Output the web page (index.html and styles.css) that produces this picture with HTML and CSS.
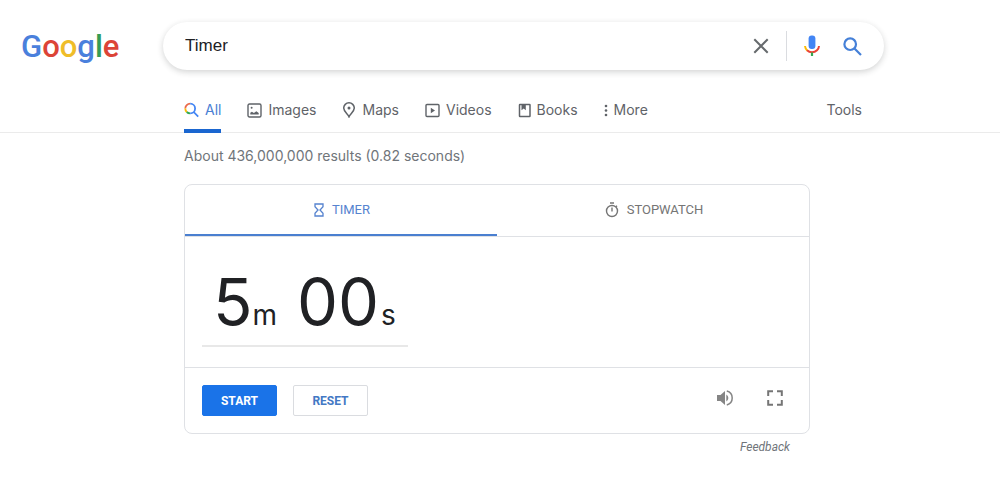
FILE: index.html
```html
<!DOCTYPE html>
<html lang="en">
<head>
<meta charset="utf-8">
<meta name="viewport" content="width=device-width, initial-scale=1">
<title>Timer - Google Search</title>
<link rel="stylesheet" href="styles.css">
</head>
<body>
<header class="top">
  <a class="logo" href="#" aria-label="Google"><span class="blue">G</span><span class="red">o</span><span class="yellow">o</span><span class="blue">g</span><span class="green">l</span><span class="red">e</span></a>
  <form class="search" role="search">
    <input class="search-input" type="text" value="Timer" aria-label="Search">
    <button class="icon-btn clear" type="button" aria-label="Clear">
      <svg width="16" height="16" viewBox="0 0 16 16" fill="none" stroke="#666a6d" stroke-width="2"><path d="M1.3 1.3 14.7 14.7M14.7 1.3 1.3 14.7"/></svg>
    </button>
    <span class="divider"></span>
    <button class="icon-btn mic" type="button" aria-label="Search by voice">
      <svg width="16" height="22" viewBox="0 0 16 22" fill="none"><rect x="4.6" y="0.5" width="6.8" height="13.5" rx="3" fill="#4285f4"/><path d="M1 11c.2 2 .9 3.4 2.2 4.500" stroke="#fbbc04" stroke-width="2"/><path d="M3 15.300c2.800 2.700 7.200 2.700 10 0 1.200-1.200 1.900-2.500 2-4.300" stroke="#ea4335" stroke-width="2"/><path d="M8 17.500V21" stroke="#34a853" stroke-width="2.200"/></svg>
    </button>
    <button class="icon-btn" type="submit" aria-label="Search">
      <svg width="19" height="19" viewBox="0 0 19 19" fill="none" stroke="#4580d8" stroke-width="2.200"><circle cx="7.200" cy="7.200" r="5.800"/><path d="m11.500 11.500 6.500 6.500"/></svg>
    </button>
  </form>
</header>

<nav class="nav" aria-label="Result types">
  <div class="nav-row">
    <a class="tab active" href="#">
      <svg width="15" height="16" viewBox="0 0 15 16" fill="none" stroke-width="1.800"><path d="M1.300 6.500A4.900 4.900 0 0 1 6.200 1.600" stroke="#ea6a4b"/><path d="M2.700 10A4.900 4.900 0 0 1 1.300 6.500" stroke="#fbbc04"/><path d="M6.200 11.400A4.900 4.900 0 0 1 2.700 10" stroke="#34a853"/><path d="M6.200 1.600a4.900 4.900 0 0 1 0 9.800M9.700 10l4.500 4.700" stroke="#4285f4"/></svg>
      <span>All</span></a>
    <a class="tab" href="#">
      <svg width="15" height="15" viewBox="0 0 15 15" fill="none" stroke="#5f6368" stroke-width="1.400"><rect x="1" y="1" width="13" height="13" rx="1.500"/><circle cx="4.600" cy="4.800" r="1" fill="#5f6368" stroke="none"/><path d="M3.300 11.600v-1.800l1.600-1 2 1.200 2.400-1.800 2.400 1.800v1.600z" fill="#5f6368" stroke="none"/></svg>
      <span>Images</span></a>
    <a class="tab" href="#">
      <svg width="14" height="16" viewBox="0 0 14 16" fill="none" stroke="#5f6368" stroke-width="1.500"><path d="M7 14.800C6 12 1.700 9.600 1.700 6.100a5.300 5.300 0 0 1 10.600 0c0 3.500-4.300 5.900-5.300 8.700z"/><circle cx="7" cy="6" r="1.500" fill="#5f6368" stroke="none"/></svg>
      <span>Maps</span></a>
    <a class="tab" href="#">
      <svg width="15" height="15" viewBox="0 0 15 15" fill="none" stroke="#5f6368" stroke-width="1.400"><rect x="1" y="1.500" width="13" height="12" rx="1"/><path d="m5.800 4.800 4.200 2.700-4.200 2.700z" fill="#5f6368" stroke="none"/></svg>
      <span>Videos</span></a>
    <a class="tab" href="#">
      <svg width="13" height="15" viewBox="0 0 13 15" fill="none" stroke="#5f6368" stroke-width="1.500"><rect x="1.500" y="1.500" width="10.500" height="12" rx="0.500"/><path d="M3.500 1.500h4.300v5.700L5.700 5.600 3.500 7.200z" fill="#5f6368" stroke="none"/></svg>
      <span>Books</span></a>
    <button class="tab more" type="button">
      <svg width="4" height="13" viewBox="0 0 4 13" fill="#5f6368"><circle cx="2" cy="2" r="1.300"/><circle cx="2" cy="6.500" r="1.300"/><circle cx="2" cy="11" r="1.300"/></svg>
      <span>More</span></button>
    <button class="tab tools" type="button">Tools</button>
  </div>
</nav>

<main class="results">
  <p class="stats">About 436,000,000 results (0.82 seconds)</p>
  <section class="card">
    <div class="modes" role="tablist">
      <button class="mode selected" type="button" role="tab" aria-selected="true">
        <svg width="10" height="14" viewBox="0 0 10 14" fill="none" stroke="#5683cf" stroke-width="1.300"><path d="M1 1h8v2.800L6 7l3 3.200V13H1v-2.800L4 7 1 3.800z"/></svg>
        <span>TIMER</span></button>
      <button class="mode" type="button" role="tab" aria-selected="false">
        <svg width="14" height="16" viewBox="0 0 14 16" fill="none" stroke="#757575" stroke-width="1.400"><circle cx="7" cy="9" r="5.500"/><path d="M5 1h4M7 5.500V9.500M11 4.800l1-1"/></svg>
        <span>STOPWATCH</span></button>
    </div>
    <div class="clock">
      <div class="time"><span class="num">5</span><span class="unit">m</span><span class="num seconds">00</span><span class="unit">s</span></div>
    </div>
    <div class="actions">
      <button class="btn primary" type="button">START</button>
      <button class="btn" type="button">RESET</button>
      <div class="tools-right">
        <button class="icon-btn" type="button" aria-label="Sound">
          <svg width="18" height="18" viewBox="0 0 18 18" fill="#858585"><path d="M1 6v6h3.500L9 16V2L4.500 6z"/><path d="M10.300 5.500c1.200.7 2 2 2 3.500s-.8 2.800-2 3.500z"/><path d="M10.800 2.100c3.100.8 5.400 3.500 5.400 6.900s-2.300 6.100-5.400 6.900" fill="none" stroke="#858585" stroke-width="1.500"/></svg>
        </button>
        <button class="icon-btn" type="button" aria-label="Full screen">
          <svg width="16" height="16" viewBox="0 0 16 16" fill="none" stroke="#757575" stroke-width="2"><path d="M1.200 6V1.200H6M10 1.200h4.800V6M14.800 10v4.800H10M6 14.800H1.200V10"/></svg>
        </button>
      </div>
    </div>
  </section>
  <a class="feedback" href="#">Feedback</a>
</main>
</body>
</html>
```
FILE: styles.css
```css
* {
  box-sizing: border-box;
}

body {
  margin: 0;
  background: #fff;
  color: #202124;
  font-family: Inter, "Liberation Sans", sans-serif;
}

button {
  margin: 0;
  padding: 0;
  border: 0;
  background: none;
  font: inherit;
  cursor: pointer;
}

a {
  text-decoration: none;
}

svg {
  display: block;
  flex: none;
}

.top {
  display: grid;
  grid-template-columns: 142px minmax(0, 721px);
  align-items: center;
  padding: 22px 16px 0 21px;
}

.logo {
  font-family: Roboto, sans-serif;
  font-size: 31px;
  line-height: 40px;
  padding-top: 2px;
  font-weight: 500;
}

.blue { color: #4a80dc; }
.red { color: #dc4437; }
.yellow { color: #efbd29; }
.green { color: #349c55; }

.search {
  display: flex;
  align-items: center;
  height: 48px;
  padding: 0 22px;
  border-radius: 24px;
  box-shadow: 0 2px 6px rgba(32, 33, 36, 0.2);
}

.search-input {
  flex: 1;
  min-width: 0;
  padding: 0;
  border: 0;
  outline: 0;
  background: none;
  color: #202124;
  font-family: "Liberation Sans", Arial, sans-serif;
  font-size: 17px;
  line-height: 24px;
}

.icon-btn {
  display: grid;
  place-items: center;
}

.divider {
  width: 1px;
  height: 30px;
  margin: 0 17px;
  background: #dadce0;
}

.mic {
  margin-right: 23px;
}

.nav {
  margin-top: 20px;
  border-bottom: 1px solid #ebebeb;
}

.nav-row {
  display: flex;
  gap: 26px;
  max-width: 878px;
  height: 42px;
  padding: 0 16px 0 184px;
}

.tab {
  display: flex;
  align-items: center;
  gap: 6px;
  height: 43px;
  padding-top: 1px;
  border-bottom: 4px solid transparent;
  color: #5f6368;
  font-size: 14px;
  line-height: 20px;
}

.active {
  border-color: #1a66d0;
  color: #4a80d4;
}

.tools {
  margin-left: auto;
}

.results {
  max-width: 826px;
  padding: 13px 16px 0 184px;
}

.stats {
  margin: 0;
  color: #70757a;
  font-size: 14px;
  line-height: 20px;
}

.card {
  margin-top: 18px;
  border: 1px solid #dfe1e5;
  border-radius: 8px;
}

.modes {
  display: grid;
  grid-template-columns: 1fr 1fr;
  border-bottom: 1px solid #dfe1e5;
}

.mode {
  display: flex;
  align-items: center;
  justify-content: center;
  gap: 8px;
  height: 51px;
  padding-left: 2px;
  border-bottom: 2px solid transparent;
  color: #757575;
  font-family: Roboto, sans-serif;
  font-size: 13px;
}

.selected {
  border-color: #4a7fd0;
  color: #5683cf;
}

.clock {
  padding: 25px 17px 20px;
  border-bottom: 1px solid #dfe1e5;
}

.time {
  display: flex;
  align-items: baseline;
  width: fit-content;
  padding: 0 12px 4px 11px;
  border-bottom: 2px solid #e8e8e8;
}

.num {
  font-size: 65px;
  line-height: 79px;
}

.seconds {
  margin: 0 2px 0 20px;
}

.unit {
  font-size: 28px;
}

.actions {
  display: flex;
  align-items: flex-start;
  gap: 16px;
  padding: 17px 26px 17px 17px;
}

.btn {
  width: 75px;
  height: 31px;
  border: 1px solid #dadce0;
  border-radius: 2px;
  color: #4378c4;
  font-family: Roboto, sans-serif;
  font-size: 12px;
  font-weight: 700;
}

.primary {
  border-color: #1a73e8;
  background: #1a73e8;
  color: #fff;
}

.tools-right {
  display: flex;
  align-items: center;
  gap: 33px;
  height: 26px;
  margin-left: auto;
}

.feedback {
  display: block;
  width: fit-content;
  margin: 5px 20px 0 auto;
  color: #70757a;
  font-family: Roboto, sans-serif;
  font-size: 12px;
  line-height: 16px;
  font-style: italic;
}
```
